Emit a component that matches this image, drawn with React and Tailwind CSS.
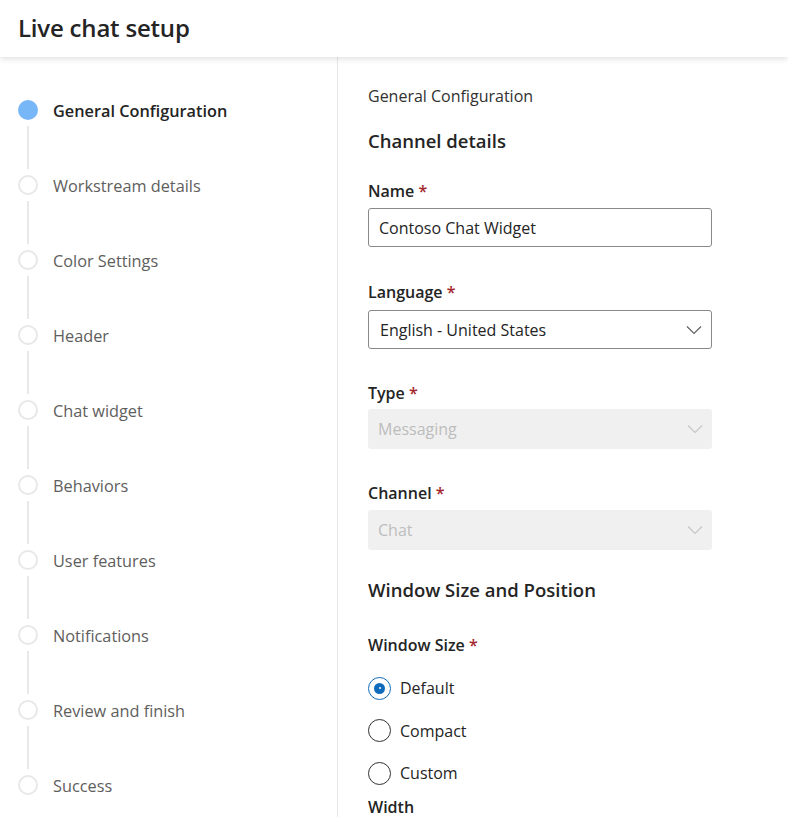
import React from "react";

const steps = [
  "General Configuration",
  "Workstream details",
  "Color Settings",
  "Header",
  "Chat widget",
  "Behaviors",
  "User features",
  "Notifications",
  "Review and finish",
  "Success",
];

function Chevron({ disabled }) {
  return (
    <svg width="16" height="10" viewBox="0 0 16 10" fill="none">
      <path
        d="M1 1.5 L8 8.5 L15 1.5"
        stroke={disabled ? "#c8c6c4" : "#605e5c"}
        strokeWidth="1.1"
      />
    </svg>
  );
}

function Label({ children, className = "" }) {
  return (
    <div className={"text-[16px] leading-[20px] font-semibold text-[#242424] " + className}>
      {children} <span className="text-[#a4262c]">*</span>
    </div>
  );
}

function Radio({ checked, label }) {
  return (
    <div className="flex items-center h-[22px]">
      {checked ? (
        <div className="w-[23px] h-[23px] rounded-full border border-[#0f6cbd] flex items-center justify-center">
          <div className="w-[11px] h-[11px] rounded-full bg-[#0f6cbd] flex items-center justify-center">
            <div className="w-[2px] h-[2px] rounded-full bg-white" />
          </div>
        </div>
      ) : (
        <div className="w-[23px] h-[23px] rounded-full border border-[#323130]" />
      )}
      <span className="ml-[9px] text-[16px] text-[#242424]">{label}</span>
    </div>
  );
}

export default function App() {
  return (
    <div
      className="w-[788px] h-[817px] overflow-hidden bg-white"
      style={{ fontFamily: '"Open Sans", "Noto Sans", sans-serif' }}
    >
      <header className="relative z-10 h-[57px] flex items-center px-[18px] bg-white shadow-[0_2px_6px_rgba(0,0,0,0.12)]">
        <h1 className="text-[24px] font-semibold text-[#242424] tracking-[-0.2px] mt-[-2px]">Live chat setup</h1>
      </header>
      <div className="flex h-[760px]">
        <aside className="w-[338px] shrink-0 border-r border-[#e6e6e6] pt-[43px]">
          {steps.map((s, i) => (
            <div key={s}>
              <div className="flex items-center h-[20px]">
                {i === 0 ? (
                  <div className="ml-[18px] w-[20px] h-[20px] rounded-full bg-[#77b7f7]" />
                ) : (
                  <div className="ml-[18px] w-[20px] h-[20px] rounded-full border-2 border-[#e8e8e8]" />
                )}
                <span
                  className={
                    "ml-[15px] text-[16.3px] leading-[20px] mt-[2px] " +
                    (i === 0 ? "font-semibold text-[#242424]" : "text-[#605e5c]")
                  }
                >
                  {s}
                </span>
              </div>
              {i < steps.length - 1 && (
                <div className="ml-[27px] my-[6px] w-[2px] h-[43px] bg-[#e8e8e8]" />
              )}
            </div>
          ))}
        </aside>
        <main className="pl-[30px] pt-[29px] flex-1">
          <div className="text-[16px] leading-[20px] text-[#323130]">General Configuration</div>
          <div className="mt-[23px] text-[18.5px] leading-[24px] font-semibold text-[#242424]">Channel details</div>

          <Label className="mt-[28px]">Name</Label>
          <div className="mt-[7px] w-[344px] h-[39px] border border-[#8a8886] rounded-[3px] flex items-center px-[10px] text-[16px] text-[#242424]">
            Contoso Chat Widget
          </div>

          <Label className="mt-[35px]">Language</Label>
          <div className="mt-[8px] w-[344px] h-[39px] border border-[#8a8886] rounded-[3px] flex items-center justify-between pl-[11px] pr-[9px] text-[16px] text-[#242424]">
            <span>English - United States</span>
            <Chevron />
          </div>

          <Label className="mt-[34px]">Type</Label>
          <div className="mt-[6px] w-[344px] h-[40px] bg-[#f0f0f0] rounded-[3px] flex items-center justify-between pl-[10px] pr-[9px] text-[16px] text-[#bdbdbd]">
            <span>Messaging</span>
            <Chevron disabled />
          </div>

          <Label className="mt-[34px]">Channel</Label>
          <div className="mt-[7px] w-[344px] h-[40px] bg-[#f0f0f0] rounded-[3px] flex items-center justify-between pl-[10px] pr-[9px] text-[16px] text-[#bdbdbd]">
            <span>Chat</span>
            <Chevron disabled />
          </div>

          <div className="mt-[28px] text-[18.5px] leading-[24px] font-semibold text-[#242424]">Window Size and Position</div>

          <Label className="mt-[33px]">Window Size</Label>
          <div className="mt-[22px] flex flex-col gap-[20.5px]">
            <Radio checked label="Default" />
            <Radio label="Compact" />
            <Radio label="Custom" />
          </div>
          <div className="mt-[13px] text-[16px] leading-[20px] font-semibold text-[#242424]">Width</div>
        </main>
      </div>
    </div>
  );
}
